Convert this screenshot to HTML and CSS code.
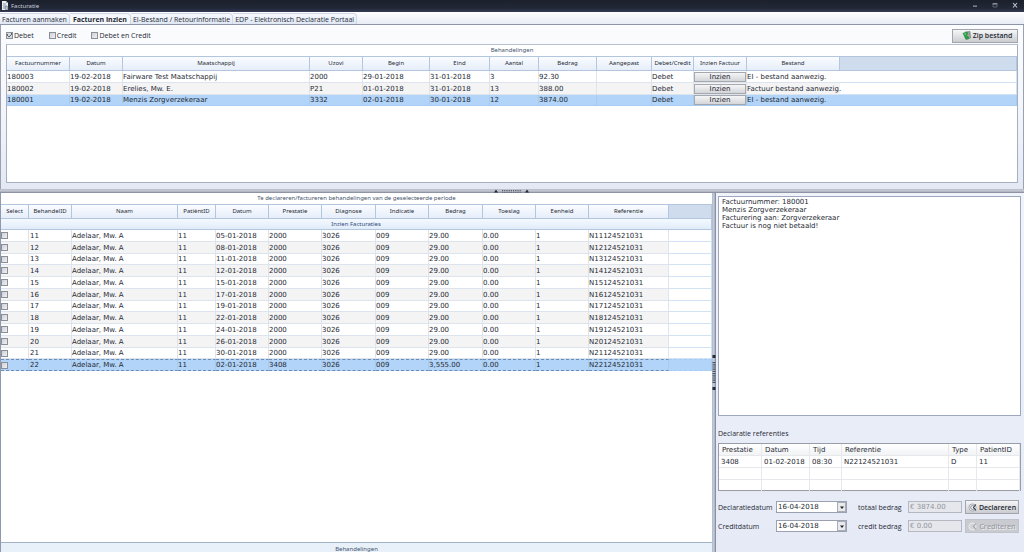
FILE: index.html
```html
<!DOCTYPE html>
<html lang="nl">
<head>
<meta charset="utf-8">
<title>Facturatie</title>
<link rel="stylesheet" href="styles.css">
</head>
<body>
<header class="titlebar">
  <svg class="app-icon" viewBox="0 0 8 10" aria-hidden="true"><path d="M1 0h4l2 2v7H1z" fill="#e9edf3"/><path d="M5 0v2h2" fill="#98a2b3"/><path d="M2 3h3M2 5h4M2 7h2" stroke="#66718a" stroke-width=".7"/><circle cx="5.6" cy="7" r="1.6" fill="#c6ccd6" stroke="#4b556b" stroke-width=".6"/></svg>
  <h1>Facturatie</h1>
  <div class="window-buttons">
    <button type="button" aria-label="Minimaliseren"><svg viewBox="0 0 8 8"><path d="M2 3.500h4v1.300H2z" fill="#9096a3"/></svg></button>
    <button type="button" aria-label="Maximaliseren"><svg viewBox="0 0 8 8"><path d="M2 2h4v3H2z" fill="none" stroke="#6a7180" stroke-width=".8"/><path d="M1.600 1.800h4.800" stroke="#a9aeba" stroke-width="1"/></svg></button>
    <button type="button" aria-label="Sluiten"><svg viewBox="0 0 8 8"><path d="M2 1l4 4.500M6 1L2 5.500" stroke="#c4c8d0" stroke-width="1.100"/></svg></button>
  </div>
</header>
<nav class="tabs">
  <button type="button" class="tab">Facturen aanmaken</button>
  <button type="button" class="tab active">Facturen inzien</button>
  <button type="button" class="tab">EI-Bestand / Retourinformatie</button>
  <button type="button" class="tab">EDP - Elektronisch Declaratie Portaal</button>
</nav>
<main class="workspace">
  <section class="invoices">
    <div class="toolbar">
      <label class="check"><input type="checkbox" checked>Debet</label>
      <label class="check"><input type="checkbox">Credit</label>
      <label class="check"><input type="checkbox">Debet en Credit</label>
      <button type="button" class="btn zip"><svg viewBox="0 0 9 9" aria-hidden="true"><path d="M3 1l5-.5.5 6.500-4 1.500z" fill="#9aa5a0" stroke="#58645e" stroke-width=".5"/><path d="M.5 2l5-1.200.5 2.500L4.500 4.500 7 6v2L3.500 8.500 2 5z" fill="#2a9a45"/><path d="M2 2.800l2-.4L3.500 4z" fill="#b6ecc0"/></svg>Zip bestand</button>
    </div>
    <div class="grid-box">
      <table class="grid">
        <caption>Behandelingen</caption>
        <colgroup><col class="w63"><col class="w53"><col class="w187"><col class="w53"><col class="w67"><col class="w60"><col class="w49"><col class="w58"><col class="w55"><col class="w42"><col class="w53"><col class="w93"><col></colgroup>
        <thead><tr><th>Factuurnummer</th><th>Datum</th><th>Maatschappij</th><th>Uzovi</th><th>Begin</th><th>Eind</th><th>Aantal</th><th>Bedrag</th><th>Aangepast</th><th>Debet/Credit</th><th>Inzien Factuur</th><th>Bestand</th><th class="rest"></th></tr></thead>
        <tbody>
          <tr><td>180003</td><td>19-02-2018</td><td>Fairware Test Maatschappij</td><td>2000</td><td>29-01-2018</td><td>31-01-2018</td><td>3</td><td>92.30</td><td></td><td>Debet</td><td class="action"><button type="button">Inzien</button></td><td class="file">EI - bestand aanwezig.</td><td class="rest"></td></tr>
          <tr><td>180002</td><td>19-02-2018</td><td>Erelies, Mw. E.</td><td>P21</td><td>01-01-2018</td><td>31-01-2018</td><td>13</td><td>388.00</td><td></td><td>Debet</td><td class="action"><button type="button">Inzien</button></td><td class="file">Factuur bestand aanwezig.</td><td class="rest"></td></tr>
          <tr class="selected"><td>180001</td><td>19-02-2018</td><td>Menzis Zorgverzekeraar</td><td>3332</td><td>02-01-2018</td><td>30-01-2018</td><td>12</td><td>3874.00</td><td></td><td>Debet</td><td class="action"><button type="button">Inzien</button></td><td class="file">EI - bestand aanwezig.</td><td class="rest"></td></tr>
        </tbody>
      </table>
    </div>
  </section>
  <div class="splitter horizontal"><svg viewBox="0 0 36 4" aria-hidden="true"><path d="M0 3.500L2 .5l2 3zM31 3.500l2-3 2 3z" fill="#252a36"/><path d="M8 1.500h19M8 3.200h19" stroke="#555c6e" stroke-width="1" stroke-dasharray="1.200 1"/></svg></div>
  <div class="lower">
    <section class="treatments">
      <table class="grid treatment-grid">
        <caption>Te declareren/factureren behandelingen van de geselecteerde periode</caption>
        <colgroup><col class="w28"><col class="w43"><col class="w106"><col class="w38"><col class="w53"><col class="w53"><col class="w54"><col class="w53"><col class="w54"><col class="w53"><col class="w53"><col class="w80"><col></colgroup>
        <thead>
          <tr><th>Select</th><th>BehandelID</th><th>Naam</th><th>PatiëntID</th><th>Datum</th><th>Prestatie</th><th>Diagnose</th><th>Indicatie</th><th>Bedrag</th><th>Toeslag</th><th>Eenheid</th><th>Referentie</th><th class="rest"></th></tr>
          <tr class="band"><th colspan="13">Inzien Facturaties</th></tr>
        </thead>
        <tbody id="treatments"></tbody>
      </table>
      <div class="footer-band">Behandelingen</div>
    </section>
    <div class="splitter vertical"><svg viewBox="0 0 4 36" aria-hidden="true"><path d="M.5 0h3v3h-3zM.5 32h3v3h-3z" fill="#252a36"/><path d="M2 7v21" stroke="#4d5465" stroke-width="3" stroke-dasharray="1.200 1"/></svg></div>
    <aside class="details">
      <textarea class="info" aria-label="Factuurinformatie" readonly>Factuurnummer: 180001
Menzis Zorgverzekeraar
Facturering aan: Zorgverzekeraar
Factuur is nog niet betaald!</textarea>
      <h2>Declaratie referenties</h2>
      <div class="ref-box">
        <table class="refs">
          <colgroup><col class="w43"><col class="w48"><col class="w32"><col><col class="w28"><col class="w43"></colgroup>
          <thead><tr><th>Prestatie</th><th>Datum</th><th>Tijd</th><th>Referentie</th><th>Type</th><th>PatientID</th></tr></thead>
          <tbody>
            <tr><td>3408</td><td>01-02-2018</td><td>08:30</td><td>N22124521031</td><td>D</td><td>11</td></tr>
            <tr><td></td><td></td><td></td><td></td><td></td><td></td></tr>
            <tr><td></td><td></td><td></td><td></td><td></td><td></td></tr>
          </tbody>
        </table>
      </div>
      <form class="form">
        <label for="decl-date">Declaratiedatum</label>
        <div class="date"><input id="decl-date" type="text" value="16-04-2018"><button type="button" aria-label="Kies declaratiedatum"><svg viewBox="0 0 4 3"><path d="M0 .5h4L2 3z" fill="#222"/></svg></button></div>
        <label class="amount-label" for="total">totaal bedrag</label>
        <input id="total" class="amount" type="text" value="€ 3874.00" disabled>
        <button type="button" class="btn"><svg viewBox="0 0 9 9" aria-hidden="true"><circle cx="4.500" cy="4.500" r="3.600" fill="#eceef1" stroke="#9a9fa9" stroke-width=".8"/><path d="M5.800 2.800a2 2 0 1 0 .2 3.200" fill="none" stroke="#6d7380" stroke-width=".8"/><path d="M7.800 1.500L5.500 4.500l2.500 3" fill="none" stroke="#333a46" stroke-width="1.100"/></svg>Declareren</button>
        <label for="credit-date">Creditdatum</label>
        <div class="date"><input id="credit-date" type="text" value="16-04-2018"><button type="button" aria-label="Kies creditdatum"><svg viewBox="0 0 4 3"><path d="M0 .5h4L2 3z" fill="#222"/></svg></button></div>
        <label class="amount-label" for="credit">credit bedrag</label>
        <input id="credit" class="amount" type="text" value="€ 0.00" disabled>
        <button type="button" class="btn" disabled><svg viewBox="0 0 9 9" aria-hidden="true"><circle cx="4.500" cy="4.500" r="3.600" fill="#d2d4d9" stroke="#eceef1" stroke-width=".9"/><path d="M7.800 1.500L5.500 4.500l2.500 3" fill="none" stroke="#a0a4ad" stroke-width="1.100"/></svg>Crediteren</button>
      </form>
    </aside>
  </div>
</main>
<script src="app.js"></script>
</body>
</html>
```

FILE: styles.css
```css
* { box-sizing: border-box; }
body {
  margin: 0;
  height: 100vh;
  display: flex;
  flex-direction: column;
  overflow: hidden;
  background: #eef1f9;
  color: #262a33;
  font: 7px/9px "DejaVu Sans", Verdana, sans-serif;
}
button, input, textarea { font: inherit; color: inherit; margin: 0; border-radius: 0; }
button { padding: 0; white-space: nowrap; }
svg { display: block; flex: none; }

.titlebar {
  display: flex;
  align-items: center;
  flex: none;
  height: 12px;
  padding: 0 5px 0 1px;
  background: linear-gradient(#1b202b, #222838 70%, #343c55);
  color: #c9cdd6;
}
.app-icon { width: 8px; height: 10px; }
.titlebar h1 { flex: 1; margin: 0 0 0 2px; font: 6px/10px "Noto Sans", sans-serif; }
.window-buttons { display: flex; gap: 12px; }
.window-buttons button { width: 8px; height: 8px; border: 0; background: none; }

.tabs {
  display: flex;
  align-items: flex-end;
  flex: none;
  height: 13px;
  background: linear-gradient(#fdfdff, #e9ecf5);
  border-bottom: 1px solid #8e95a8;
}
.tab {
  height: 11px;
  padding: 0 2px;
  border: 1px solid #d0d6e4;
  border-width: 1px 1px 0 0;
  border-radius: 0 4px 0 0;
  background: linear-gradient(#f7f9fd, #dfe7f4);
  font: 7px/9px "Open Sans", sans-serif;
}
.tab.active { padding: 0 3px; background: #f5f7fc; font-weight: 700; }

.workspace {
  flex: 1;
  min-height: 0;
  display: grid;
  grid-template-rows: minmax(0, 164fr) 4px minmax(0, 359fr);
}
.invoices {
  display: flex;
  flex-direction: column;
  padding: 2px 5px 6px;
  border-left: 1px solid #9aa1b3;
  border-right: 1px solid #9aa1b3;
  background: linear-gradient(#fbfcfe, #f4f6fb 50%, #e3e8f4);
}
.toolbar { display: flex; align-items: center; height: 17px; flex: none; gap: 15px; font: 7px/9px "Open Sans", sans-serif; }
.check { display: flex; align-items: center; gap: 1px; }
input[type="checkbox"] {
  appearance: none;
  width: 7px;
  height: 7px;
  border: 1px solid #8b8f98;
  background: linear-gradient(135deg, #cfd1d6, #f0f0f2);
}
input[type="checkbox"]:checked {
  background: conic-gradient(from 35deg at 40% 80%, #5c626c 0 20deg, transparent 0 270deg, #5c626c 0 300deg, transparent 0), #d8dade;
}
.btn {
  display: flex;
  align-items: center;
  justify-content: center;
  gap: 2px;
  height: 14px;
  border: 1px solid #a3a5ac;
  background: linear-gradient(#f6f6f7, #dcdde0 60%, #cbccd0);
  font: 600 7px/9px "Open Sans", sans-serif;
}
.btn svg { width: 9px; height: 9px; }
.zip { width: 66px; padding-left: 4px; margin-left: auto; }

.grid-box { flex: 1; min-height: 0; background: #fff; border: 1px solid #a5afc2; border-top-color: #b6bfce; }
table { width: 100%; table-layout: fixed; border-collapse: separate; border-spacing: 0; }
.w28 { width: 28px; }
.w32 { width: 32px; }
.w38 { width: 38px; }
.w42 { width: 42px; }
.w43 { width: 43px; }
.w48 { width: 48px; }
.w49 { width: 49px; }
.w53 { width: 53px; }
.w54 { width: 54px; }
.w55 { width: 55px; }
.w58 { width: 58px; }
.w60 { width: 60px; }
.w63 { width: 63px; }
.w67 { width: 67px; }
.w80 { width: 80px; }
.w93 { width: 93px; }
.w106 { width: 106px; }
.w187 { width: 187px; }
.grid caption { height: 11px; font: 6px/11px "Noto Sans", sans-serif; color: #46536b; }
.grid th {
  height: 15px;
  padding: 0;
  border: 1px solid #b4c6de;
  border-width: 1px 1px 1px 0;
  background: linear-gradient(#fafcff, #e6eefa);
  font: 6px/9px "Noto Sans", sans-serif;
  white-space: nowrap;
}
.grid th.rest { background: #cfdcee; }
.grid .band th { height: 11px; border-top: 0; background: linear-gradient(#f4f9ff, #e0ecfa); color: #2f4a78; line-height: 8px; }
.grid td {
  height: 12px;
  padding: 1px 0 0;
  border: 1px solid #dde4ed;
  border-width: 0 1px 1px 0;
  line-height: 9px;
  white-space: nowrap;
}
.grid tbody tr:nth-child(4n+3) td { height: 11px; }
.grid tbody tr:nth-child(even) td { background: #f4f4f5; }
.grid tbody tr:nth-child(even) td.rest { background: #fff; }
.grid tbody tr.selected td, .grid tbody tr.selected td.rest { background: #b1d4f8; border-color: #a5cbf1; }
.grid td.rest { border-color: #d0e2f3; }
.grid td.action { padding: 0; }
.grid td.file { font: 7px/9px "DejaVu Sans", sans-serif; border-right: 0; }
.action button {
  display: block;
  width: 100%;
  height: 10px;
  border: 1px solid #a5a8ae;
  background: linear-gradient(#f5f5f6, #d4d5d8);
  line-height: 8px;
}

.splitter { display: flex; align-items: center; justify-content: center; }
.horizontal { background: linear-gradient(#b9bdc9, #c5c8d2 50%, #7c8294); }
.horizontal svg { width: 36px; height: 4px; }
.vertical { background: linear-gradient(90deg, #a9bacd, #c9cedb 50%, #747b8f); }
.vertical svg { width: 4px; height: 36px; }

.lower { display: grid; grid-template-columns: minmax(0, 712fr) 4px minmax(0, 308fr); min-height: 0; }
.treatments { display: flex; flex-direction: column; background: #fff; border-left: 1px solid #8f98ac; min-height: 0; }
.treatment-grid td:nth-child(2) { padding-left: 1px; }
.treatment-grid td:first-child { padding: 0; }
.treatment-grid input { display: block; }
.treatment-grid tbody tr.selected td { border-bottom: 1px dashed #6c8cb2; border-top: 1px dashed #6c8cb2; padding-top: 0; }
.footer-band {
  margin-top: auto;
  height: 10px;
  border-top: 1px solid #a3b2c6;
  background: #e8f0fa;
  text-align: center;
  font: 6px/12px "Noto Sans", sans-serif;
  color: #46536b;
}

.details {
  display: flex;
  flex-direction: column;
  padding: 3px 3px 3px 2px;
  background: linear-gradient(#f0f3fa, #e5eaf6);
  min-height: 0;
}
.info {
  flex: 1;
  width: 100%;
  resize: none;
  padding: 1px 3px;
  border: 1px solid #9da7bd;
  outline: 0;
  background: #fff;
  line-height: 8px;
}
.details h2 { margin: 13px 0 5px; font: 7px/9px "Open Sans", sans-serif; }
.ref-box { background: #fff; border: 1px solid #979da9; height: 48px; }
.refs th, .refs td { height: 12px; padding: 1px 3px 0; border: 0 solid #e6e8ec; border-width: 0 1px 1px 0; text-align: left; font-weight: 400; line-height: 9px; white-space: nowrap; }
.refs td { padding: 1px 2px 0; }
.refs th { background: linear-gradient(#fff, #f2f3f5); }
.form {
  display: grid;
  grid-template-columns: 58px 71px minmax(0, 61px) 55px 56px;
  grid-auto-rows: 14px;
  gap: 5px 0;
  align-items: center;
  padding: 9px 0 16px;
}
.form label { font: 7px/9px "Open Sans", sans-serif; white-space: nowrap; }
.form .amount-label { padding-left: 11px; }
.form > .btn { margin-left: 2px; }
.date { display: flex; height: 12px; border: 1px solid #9aa2b2; background: #fff; }
.date input { flex: 1; min-width: 0; padding: 0 1px; border: 0; background: none; }
.date button { display: flex; align-items: center; justify-content: center; width: 9px; border: 1px solid #a9adb7; background: #e9eaed; }
.date svg { width: 4px; height: 3px; }
.amount { width: 54px; height: 12px; padding: 0 1px; border: 1px solid #b5b8c0; background: #e5e7ec; }
.amount:disabled { color: #92959c; }
.btn:disabled { background: #c9cbd0; border-color: #c0c3ca; color: #9c9fa6; text-shadow: 1px 1px #eceef2; }
```

FILE: app.js
```js
const dates = ["05-01", "08-01", "11-01", "12-01", "15-01", "17-01", "19-01", "22-01", "24-01", "26-01", "30-01", "02-01"];

document.getElementById("treatments").innerHTML = dates.map((date, i) => {
  const id = 11 + i;
  const last = id === 22;
  const cells = [id, "Adelaar, Mw. A", "11", `${date}-2018`, last ? "3408" : "2000", "3026", "009", last ? "3,555.00" : "29.00", "0.00", "1", `N${id}124521031`];
  return `<tr class="${last ? "selected" : ""}"><td><input type="checkbox" aria-label="Selecteer ${id}"></td>${cells.map(c => `<td>${c}</td>`).join("")}<td class="rest"></td></tr>`;
}).join("");
```
